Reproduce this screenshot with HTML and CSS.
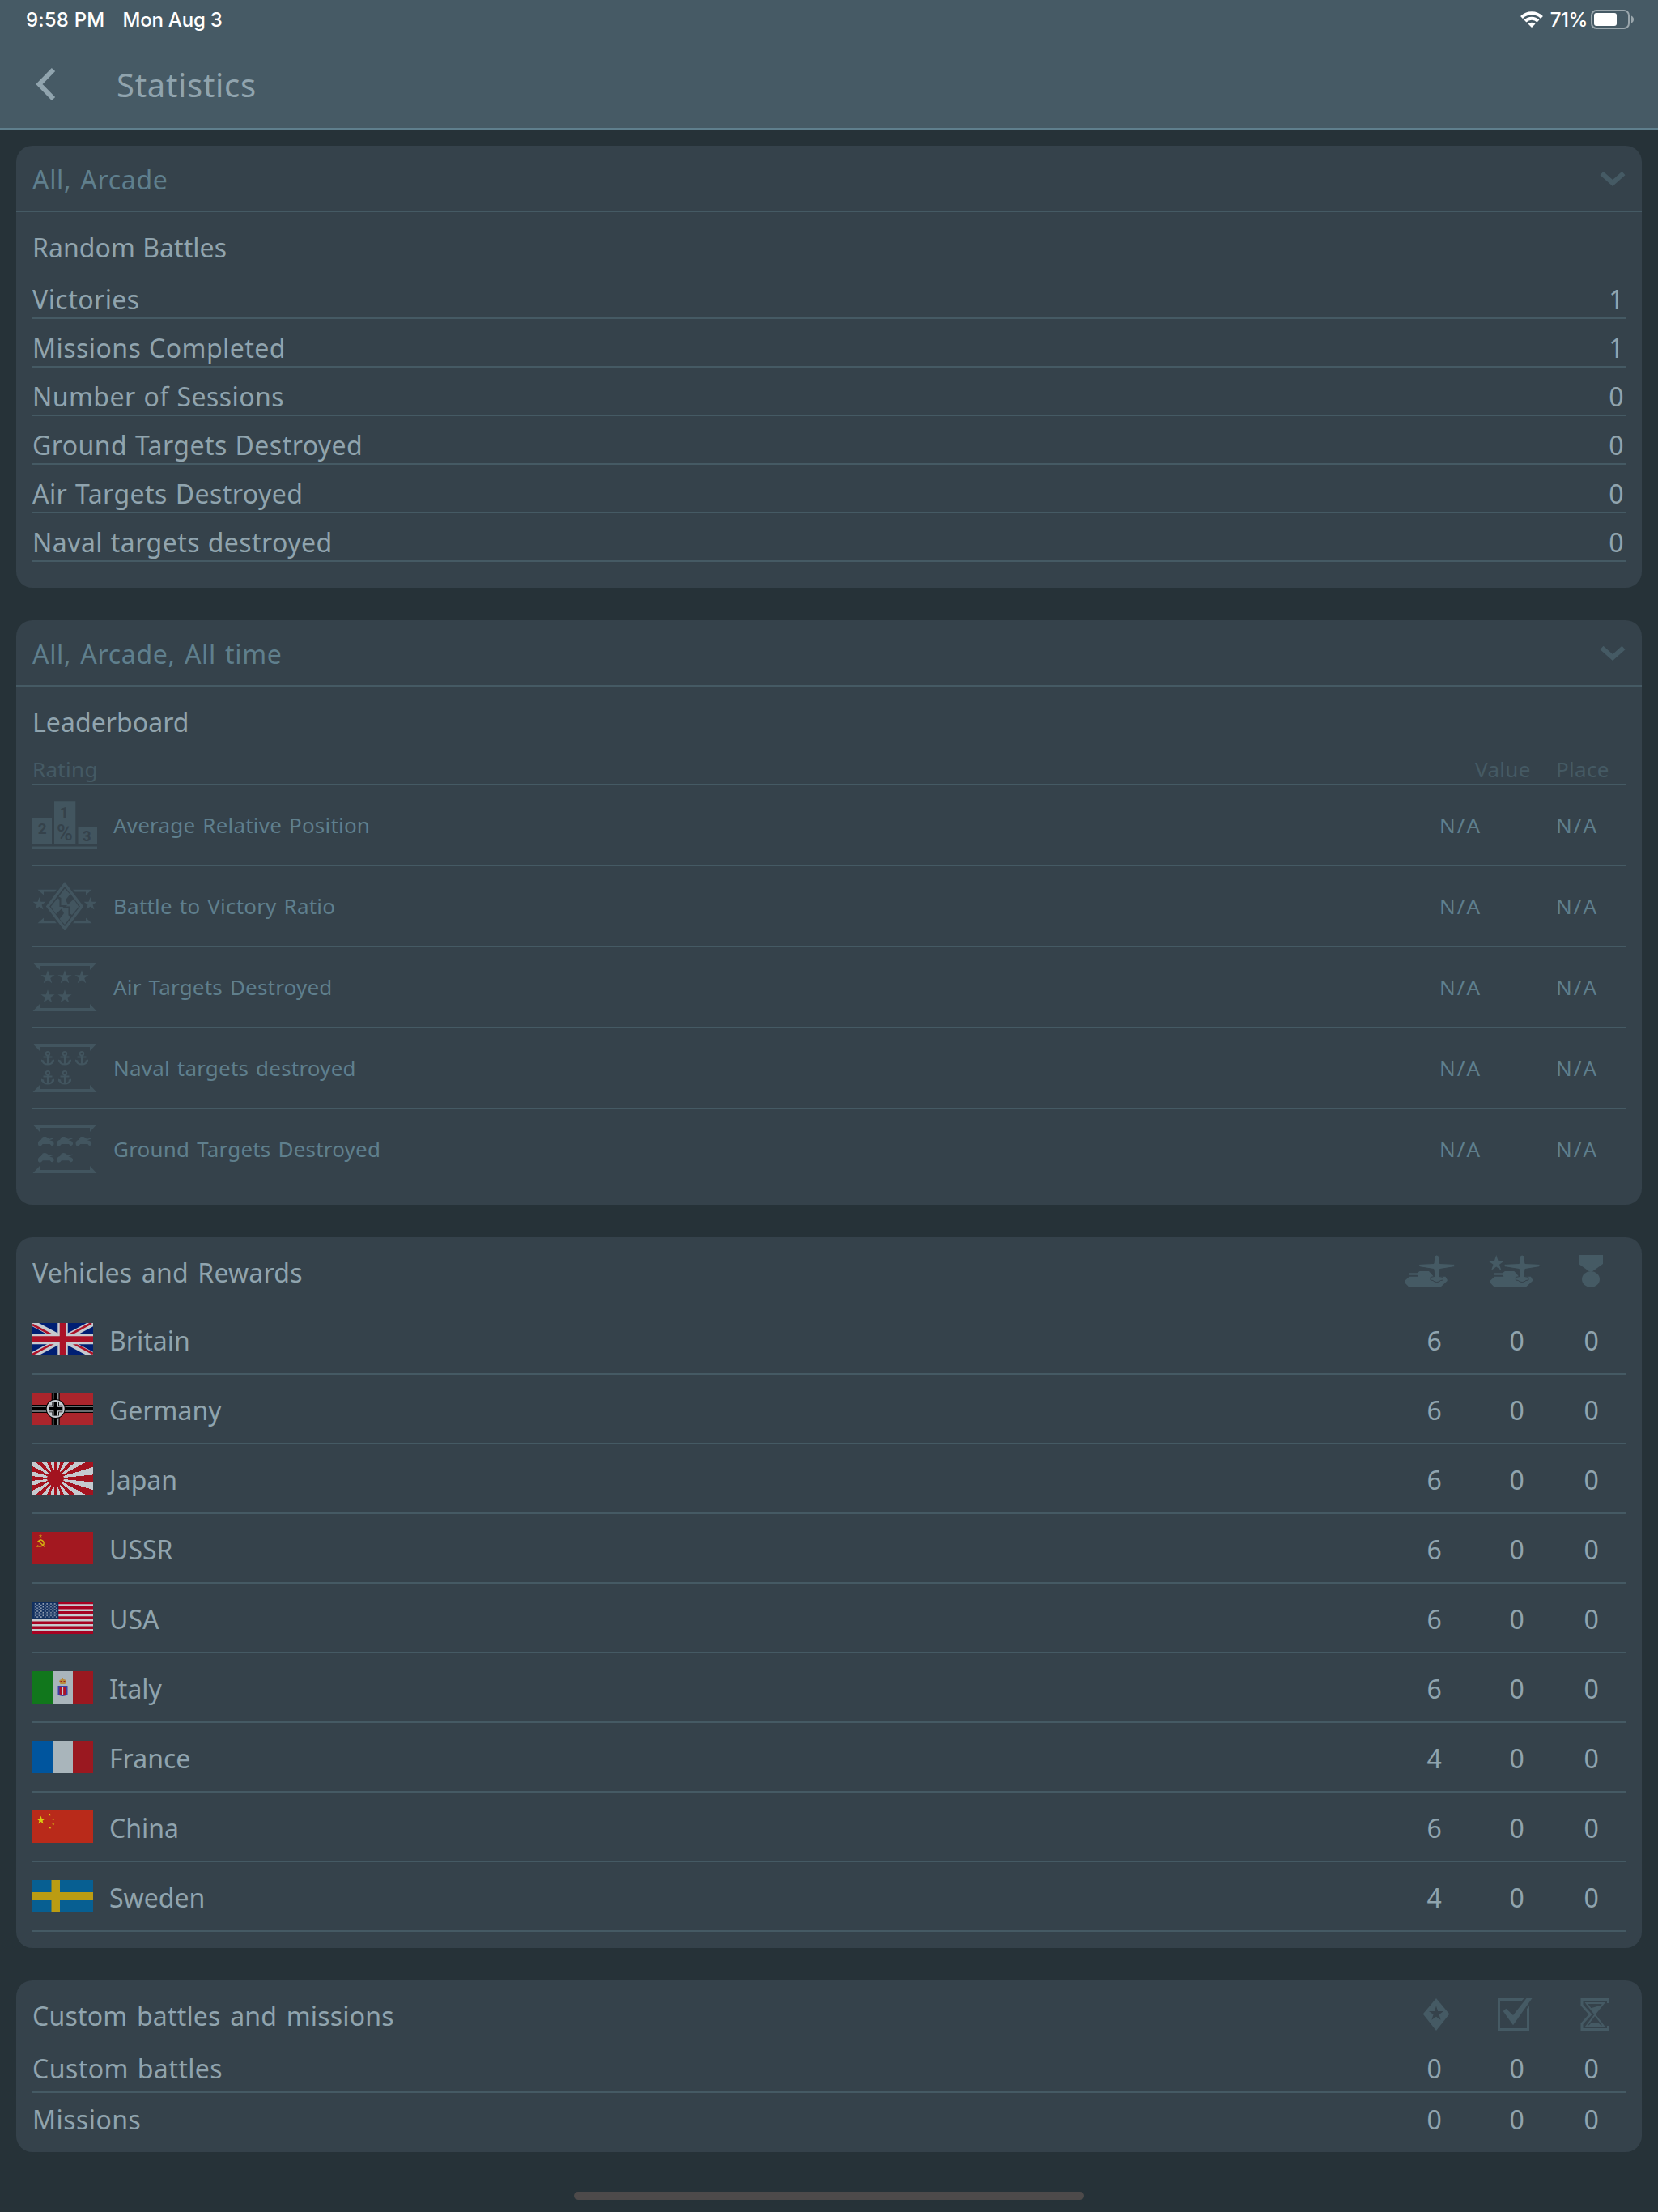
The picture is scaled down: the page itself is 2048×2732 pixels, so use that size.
FILE: index.html
```
<!DOCTYPE html>
<html lang="en">
<head>
<meta charset="UTF-8">
<meta name="viewport" content="width=device-width, initial-scale=1.0">
<title>Statistics</title>
<link rel="stylesheet" href="styles.css">
</head>
<body>

<svg class="defs" width="0" height="0">
    <symbol id="star" viewBox="-10 -10 20 20">
        <polygon points="0,-10 2.25,-3.09 9.51,-3.09 3.63,1.18 5.88,8.09 0,3.82 -5.88,8.09 -3.63,1.18 -9.51,-3.09 -2.25,-3.09"/>
    </symbol>
    <symbol id="frame" viewBox="0 0 80 60">
        <path d="M.5 0H79.5L71 9V4H9V9zM.5 60H79.5L71 51V56H9V51z"/>
    </symbol>
    <symbol id="anchor" viewBox="0 0 16 18">
        <path d="M8 6V16M2.5 7.5H13.5M1.5 12Q2.5 16.5 8 16.5T14.5 12" fill="none" stroke="currentColor" stroke-width="2.2"/>
        <circle cx="8" cy="3.2" r="2.3" fill="none" stroke="currentColor" stroke-width="1.8"/>
        <path d="M0 14V10.5L4 12zM16 14V10.5L12 12z"/>
    </symbol>
    <symbol id="tank" viewBox="0 0 20 12">
        <path d="M0 8Q1 4.500 4 4L6 .5Q9-.5 11.500 1L14 3L19.500 1.500V2.800L14.500 4.500L18 5.500Q20.500 7 20 9.500Q19 12 16.500 11L15 9.200H6L4.500 11Q1.500 12.500.5 10.500z"/>
    </symbol>
    <symbol id="vehicles" viewBox="0 0 80 40">
        <path d="M8 22.300H18.500L21.500 20H33L39 26.700H53.500L55.700 30.500V32L47 40H8.700L3 34V32L8.700 26.700H20L18.500 24.700H8z"/>
        <path class="cut" d="M39.700 3Q40 0 42.700 0T45.700 3L46.500 10.500L63.500 11.300Q65 12 65 13.200T63.500 14.800L46.500 17.500L45.700 26.500L50.500 27.500V31Q47 31 45.500 33Q42.700 34 40 33Q38.500 31 35 31V27.500L39.800 26.500L39 17.500L22 14.800Q20.300 14.500 20.300 13.200T22 11.300L39 10.500z"/>
    </symbol>
</svg>

<header class="topbar">
    <div class="status">
        <span class="time">9:58 PM</span>
        <span class="date">Mon Aug 3</span>
        <svg class="wifi" width="28" height="20" viewBox="0 0 28 20">
            <path d="M1.500 7.500A17.500 17.500 0 0 1 26.500 7.500M6 12A11.300 11.300 0 0 1 22 12" fill="none" stroke="#fff" stroke-width="4"/>
            <path d="M9.500 15.500A6.500 6.500 0 0 1 18.500 15.500L14 20z" fill="#fff"/>
        </svg>
        <span class="percent">71%</span>
        <svg class="battery" width="54" height="24" viewBox="0 0 54 24">
            <rect x="1" y="1" width="46" height="22" rx="6" fill="none" stroke="#9aa6ac" stroke-width="2"/>
            <rect x="4" y="4" width="28" height="16" rx="3" fill="#fff"/>
            <path d="M50 7.500Q53 9 53 12T50 16.500z" fill="#9aa6ac"/>
        </svg>
    </div>
    <div class="nav">
        <svg class="back" width="30" height="44" viewBox="0 0 30 44">
            <path d="M24 4L6.500 22L24 40" fill="none" stroke="currentColor" stroke-width="6"/>
        </svg>
        <h1>Statistics</h1>
    </div>
</header>

<main>
    <section class="card battles">
        <div class="filter">
            <span>All, Arcade</span>
            <svg width="32" height="20" viewBox="0 0 32 20"><path d="M2.500 3L16 15L29.500 3" fill="none" stroke="currentColor" stroke-width="6"/></svg>
        </div>
        <h2>Random Battles</h2>
        <div class="stat"><span>Victories</span><span>1</span></div>
        <div class="stat"><span>Missions Completed</span><span>1</span></div>
        <div class="stat"><span>Number of Sessions</span><span>0</span></div>
        <div class="stat"><span>Ground Targets Destroyed</span><span>0</span></div>
        <div class="stat"><span>Air Targets Destroyed</span><span>0</span></div>
        <div class="stat"><span>Naval targets destroyed</span><span>0</span></div>
    </section>

    <section class="card leaderboard">
        <div class="filter">
            <span>All, Arcade, All time</span>
            <svg width="32" height="20" viewBox="0 0 32 20"><path d="M2.500 3L16 15L29.500 3" fill="none" stroke="currentColor" stroke-width="6"/></svg>
        </div>
        <h2>Leaderboard</h2>
        <div class="columns"><span>Rating</span><span>Value</span><span>Place</span></div>
        <div class="rating">
            <svg width="80" height="60" viewBox="0 0 80 60">
                <path d="M0 21H24V53.300H0zM27 .3H53.300V53.300H27zM56.500 32.300H80V53.300H56.500zM0 56.500H80V59.300H0z"/>
                <g class="digits">
                    <text x="12.300" y="41">2</text>
                    <text x="39.300" y="21">1</text>
                    <text x="67.300" y="50">3</text>
                    <text class="pct" x="40" y="48.500">%</text>
                </g>
            </svg>
            <span>Average Relative Position</span><span>N/A</span><span>N/A</span>
        </div>
        <div class="rating">
            <svg width="80" height="60" viewBox="0 0 80 60">
                <path d="M6.500 9.700H30L27.500 12.500H14V16.500zM73.500 9.700H50L52.500 12.500H66V16.500zM6.500 51.300H30L27.500 48.500H14V44.500zM73.500 51.300H50L52.500 48.500H66V44.500z"/>
                <use href="#star" x="0" y="19" width="17" height="17"/>
                <use href="#star" x="63" y="19" width="17" height="17"/>
                <path d="M40 3L61 30.500L40 58L19 30.500z" fill="none" stroke="currentColor" stroke-width="3.500"/>
                <path id="half" d="M40 8.500L46.500 15.500L41 22.500L44.500 29H35.500V20L32.500 18.500zM31 20.500L33.500 22V31H38.500L29 40L22.800 30.700z"/>
                <use href="#half" transform="rotate(180 40 30.700)"/>
            </svg>
            <span>Battle to Victory Ratio</span><span>N/A</span><span>N/A</span>
        </div>
        <div class="rating">
            <svg width="80" height="60" viewBox="0 0 80 60">
                <use href="#frame"/>
                <use href="#star" x="10" y="9" width="18" height="18"/>
                <use href="#star" x="31" y="9" width="18" height="18"/>
                <use href="#star" x="52" y="9" width="18" height="18"/>
                <use href="#star" x="10" y="33" width="18" height="18"/>
                <use href="#star" x="31" y="33" width="18" height="18"/>
            </svg>
            <span>Air Targets Destroyed</span><span>N/A</span><span>N/A</span>
        </div>
        <div class="rating">
            <svg width="80" height="60" viewBox="0 0 80 60">
                <use href="#frame"/>
                <use href="#anchor" x="11" y="9" width="16" height="18"/>
                <use href="#anchor" x="32" y="9" width="16" height="18"/>
                <use href="#anchor" x="53" y="9" width="16" height="18"/>
                <use href="#anchor" x="11" y="33" width="16" height="18"/>
                <use href="#anchor" x="32" y="33" width="16" height="18"/>
            </svg>
            <span>Naval targets destroyed</span><span>N/A</span><span>N/A</span>
        </div>
        <div class="rating">
            <svg width="80" height="60" viewBox="0 0 80 60">
                <use href="#frame"/>
                <use href="#tank" x="6.700" y="14.700" width="20" height="12"/>
                <use href="#tank" x="30" y="14.700" width="20" height="12"/>
                <use href="#tank" x="53.300" y="14.700" width="20" height="12"/>
                <use href="#tank" x="6.700" y="35" width="20" height="12"/>
                <use href="#tank" x="30" y="35" width="20" height="12"/>
            </svg>
            <span>Ground Targets Destroyed</span><span>N/A</span><span>N/A</span>
        </div>
    </section>

    <section class="card vehicles">
        <div class="heading">
            <h2>Vehicles and Rewards</h2>
            <svg width="80" height="40" viewBox="0 0 80 40"><use href="#vehicles"/></svg>
            <svg width="80" height="40" viewBox="0 0 80 40">
                <use href="#vehicles" x="3.400" width="80" height="40"/>
                <use href="#star" x="2.500" y="0" width="23.500" height="21"/>
            </svg>
            <svg width="80" height="40" viewBox="0 0 80 40">
                <path d="M24 0H54V11L41 20.300H37L24 11z"/>
                <ellipse cx="39" cy="30" rx="11" ry="10"/>
            </svg>
        </div>
        <div class="country">
            <svg width="75" height="40" viewBox="0 0 75 40">
                <path fill="#001f73" d="M0 0H75V40H0z"/>
                <path stroke="#c5cacf" stroke-width="7.500" d="M0 0L75 40M75 0L0 40"/>
                <path stroke="#ab1228" stroke-width="2.600" d="M0 2L37 21.700M75 38L38 18.300M73 0L38 19M0 39L36 19.700"/>
                <path stroke="#c5cacf" stroke-width="12.500" d="M37.500 0V40M0 20H75"/>
                <path stroke="#ab1228" stroke-width="7.500" d="M37.500 0V40M0 20H75"/>
            </svg>
            <span>Britain</span><span>6</span><span>0</span><span>0</span>
        </div>
        <div class="country">
            <svg width="75" height="40" viewBox="0 0 75 40">
                <path fill="#ab252c" d="M0 0H75V40H0z"/>
                <path stroke="#000" stroke-width="10" d="M28.700 0V40M0 20H75"/>
                <path stroke="#8d9397" stroke-width="7.500" d="M28.700 0V40M0 20H75"/>
                <path stroke="#000" stroke-width="4.600" d="M28.700 0V40M0 20H75"/>
                <circle cx="28.700" cy="20" r="12" fill="#000"/>
                <circle cx="28.700" cy="20" r="11" fill="#c5cacf"/>
                <path stroke="#000" stroke-width="8.500" d="M28.700 11.500V28.500M20.200 20H37.200"/>
                <path stroke="#c5cacf" stroke-width="6.800" d="M28.700 11.500V28.500M20.200 20H37.200"/>
                <path stroke="#000" stroke-width="4.600" d="M28.700 11.500V28.500M20.200 20H37.200"/>
            </svg>
            <span>Germany</span><span>6</span><span>0</span><span>0</span>
        </div>
        <div class="country">
            <div class="rising-sun"></div>
            <span>Japan</span><span>6</span><span>0</span><span>0</span>
        </div>
        <div class="country">
            <svg width="75" height="40" viewBox="0 0 75 40">
                <path fill="#a31820" d="M0 0H75V40H0z"/>
                <use href="#star" x="7.500" y="2.500" width="5" height="5" fill="#c48a14"/>
                <path fill="none" stroke="#d6b40f" stroke-width="1.400" d="M10 9.800Q15 11 14 15.500Q11 19.500 6 17M5.500 18.500L7 17M6.500 12L9.500 10L8 12L15 18.300"/>
            </svg>
            <span>USSR</span><span>6</span><span>0</span><span>0</span>
        </div>
        <div class="country">
            <svg width="75" height="40" viewBox="0 0 75 40">
                <defs>
                    <pattern id="canton" x="2.500" y="2" width="4.800" height="3.600" patternUnits="userSpaceOnUse">
                        <circle cx="1.200" cy="1" r=".9" fill="#a9b4c2"/>
                        <circle cx="3.600" cy="2.800" r=".9" fill="#a9b4c2"/>
                    </pattern>
                </defs>
                <path fill="#a60222" d="M0 0H75V40H0z"/>
                <path stroke="#c5cacf" stroke-width="2.600" d="M0 4.600H75M0 10.800H75M0 16.900H75M0 23.100H75M0 29.200H75M0 35.400H75"/>
                <path fill="#12305f" d="M0 0H32.300V22H0z"/>
                <path fill="url(#canton)" d="M2.500 2H30.500V20H2.500z"/>
            </svg>
            <span>USA</span><span>6</span><span>0</span><span>0</span>
        </div>
        <div class="country">
            <svg width="75" height="40" viewBox="0 0 75 40">
                <path fill="#11771c" d="M0 0H25V40H0z"/>
                <path fill="#a9b5bb" d="M25 0H50V40H25z"/>
                <path fill="#9a1820" d="M50 0H75V40H50z"/>
                <path fill="#3a3fa8" d="M31.500 18H43.500V29Q42 30.500 37.500 31Q33 30.500 31.500 29z"/>
                <path fill="#ab1228" d="M33.500 20H42V28.500L37.500 29.500L33.500 28.500z"/>
                <path stroke="#c5cacf" stroke-width="1.200" d="M37.500 20V29.500M33.500 24.500H42"/>
                <path fill="#b98a3a" d="M33 12.500Q33.500 9.500 37 10V8H38V10Q41.500 9.500 42 12.500L40.500 16H34.500z"/>
                <path fill="#9a1820" d="M34.500 12H36.500V14H34.500zM38.500 12H40.500V14H38.500z"/>
            </svg>
            <span>Italy</span><span>6</span><span>0</span><span>0</span>
        </div>
        <div class="country">
            <svg width="75" height="40" viewBox="0 0 75 40">
                <path fill="#00559e" d="M0 0H25V40H0z"/>
                <path fill="#a9b5bb" d="M25 0H50V40H25z"/>
                <path fill="#9a1820" d="M50 0H75V40H50z"/>
            </svg>
            <span>France</span><span>4</span><span>0</span><span>0</span>
        </div>
        <div class="country">
            <svg width="75" height="40" viewBox="0 0 75 40">
                <path fill="#b92a1a" d="M0 0H75V40H0z"/>
                <g fill="#d9cb10">
                    <use href="#star" x="5" y="6.500" width="11" height="11"/>
                    <use href="#star" x="19.500" y="3.500" width="3.500" height="3.500"/>
                    <use href="#star" x="24" y="8.800" width="3.500" height="3.500"/>
                    <use href="#star" x="24" y="15.200" width="3.500" height="3.500"/>
                    <use href="#star" x="20" y="19.700" width="3.500" height="3.500"/>
                </g>
            </svg>
            <span>China</span><span>6</span><span>0</span><span>0</span>
        </div>
        <div class="country">
            <svg width="75" height="40" viewBox="0 0 75 40">
                <path fill="#075f92" d="M0 0H75V40H0z"/>
                <path fill="#bb9c12" d="M0 15H23.500V0H34V15H75V25H34V40H23.500V25H0z"/>
            </svg>
            <span>Sweden</span><span>4</span><span>0</span><span>0</span>
        </div>
    </section>

    <section class="card custom">
        <div class="heading">
            <h2>Custom battles and missions</h2>
            <svg width="80" height="40" viewBox="0 0 80 40">
                <path d="M42 0L58.300 19.500L42 40L25.700 19.500z"/>
                <use class="hole" href="#star" x="32.500" y="9.500" width="19" height="19"/>
            </svg>
            <svg width="80" height="40" viewBox="0 0 80 40">
                <path d="M16 0H48.500L46 3H19V37H52V13L55 9.500V40H16z"/>
                <path d="M22.700 16L26.300 12.700L35 21L51.500 0H58.500L35 33.300z"/>
            </svg>
            <svg width="80" height="40" viewBox="0 0 80 40">
                <path d="M60.500 6V1.500H28V8.500L38.500 20L28 31.500V38.500H60.500V34" fill="none" stroke="currentColor" stroke-width="3"/>
                <path d="M33.500 6H55L44 19.500zM44 20.500L33.500 34.500H55z" fill="none" stroke="currentColor" stroke-width="2"/>
                <path d="M38 12.500L54 8L44 20zM36 34L40 30H48L52 34z"/>
            </svg>
        </div>
        <div class="total"><span>Custom battles</span><span>0</span><span>0</span><span>0</span></div>
        <div class="total"><span>Missions</span><span>0</span><span>0</span><span>0</span></div>
    </section>
</main>

<div class="home-indicator"></div>

</body>
</html>
```
FILE: styles.css
```
* {
    box-sizing: border-box;
}
body {
    margin: 0;
    height: 2732px;
    background-color: #263238;
    color: #90a4ae;
    font-family: "Noto Sans", sans-serif;
    font-size: 32px;
    letter-spacing: 0.45px;
    display: flex;
    flex-direction: column;
    overflow: hidden;
}
svg {
    display: block;
    flex: none;
    fill: currentColor;
}
.defs {
    position: absolute;
}
h1, h2 {
    margin: 0;
    font-weight: normal;
}

/* top bar */
.topbar {
    height: 160px;
    background-color: #465a65;
    border-bottom: 2px solid #5f7f8d;
}
.status {
    height: 48px;
    padding: 0 29px 0 32px;
    display: flex;
    align-items: center;
    color: #fff;
    font-family: Inter, sans-serif;
    font-size: 24px;
    font-weight: 500;
    letter-spacing: 0.2px;
}
.date {
    margin-left: 22px;
    letter-spacing: -0.2px;
}
.wifi {
    margin-left: auto;
}
.percent {
    margin: 0 4px 0 9px;
    letter-spacing: -0.4px;
}
.nav {
    height: 112px;
    padding: 0 0 0 42px;
    display: flex;
    align-items: center;
}
h1 {
    margin-left: 72px;
    padding-top: 1px;
    font-size: 40px;
    letter-spacing: 0.7px;
}

/* cards */
main {
    padding: 20px;
    display: flex;
    flex-direction: column;
    gap: 40px;
}
.card {
    padding: 0 20px;
    background-color: #35424b;
    border-radius: 20px;
}
.filter {
    height: 82px;
    margin: 0 -20px;
    padding: 2px 20px 0 20px;
    display: flex;
    align-items: center;
    justify-content: space-between;
    letter-spacing: 0.7px;
    word-spacing: 2px;
    border-bottom: 2px solid #455a64;
    color: #5f7f8d;
}
.filter svg {
    color: #455a64;
}
h2 {
    font-size: 32px;
    line-height: 58px;
    letter-spacing: 0.2px;
    word-spacing: 3px;
}
.filter + h2 {
    height: 72px;
    padding-top: 15px;
    letter-spacing: 0.05px;
    word-spacing: 1px;
}

/* random battles */
.battles {
    padding-bottom: 32px;
}
.stat {
    height: 60px;
    padding: 13px 2px 0 0;
    display: flex;
    justify-content: space-between;
    line-height: 46px;
    word-spacing: 1px;
    border-bottom: 2px solid #455a64;
}

/* leaderboard */
.leaderboard {
    padding-bottom: 18px;
}
.columns {
    height: 50px;
    padding-top: 12px;
    display: grid;
    grid-template-columns: 1fr 100px 86px;
    line-height: 36px;
    font-size: 26px;
    letter-spacing: 0.3px;
    color: #455a64;
    border-bottom: 2px solid #455a64;
}
.rating {
    height: 100px;
    display: grid;
    grid-template-columns: 100px 1fr 144px 86px;
    align-items: center;
    font-size: 26px;
    color: #5f7f8d;
    border-bottom: 2px solid #455a64;
}
.rating:last-child {
    border-bottom-color: transparent;
}
.rating span {
    letter-spacing: 0.2px;
    word-spacing: 2px;
}
.rating span + span {
    letter-spacing: 2px;
}
.rating svg {
    color: #42555f;
}
.digits {
    fill: #35424b;
    font: bold 19px Roboto, sans-serif;
    letter-spacing: 0;
    text-anchor: middle;
}
.digits .pct {
    font-size: 27px;
    font-weight: 500;
}

/* vehicles, custom battles */
.heading, .country, .total {
    display: grid;
    align-items: center;
    justify-items: center;
    padding-right: 1px;
}
.heading {
    height: 84px;
    grid-template-columns: 1fr 102px 102px 82px;
}
.heading h2 {
    padding-top: 3px;
}
.heading h2, .total span:first-child {
    justify-self: start;
}
.heading svg {
    color: #455a64;
}
.cut {
    stroke: #35424b;
    stroke-width: 1;
}
.hole {
    fill: #35424b;
}
.vehicles {
    padding-bottom: 20px;
}
.country {
    height: 86px;
    grid-template-columns: 75px 1fr 102px 102px 82px;
    border-bottom: 2px solid #455a64;
}
.country span {
    padding-top: 3px;
}
.country span:nth-child(2) {
    justify-self: start;
    margin-left: 20px;
    letter-spacing: 0;
}
.rising-sun {
    width: 75px;
    height: 40px;
    background:
        radial-gradient(circle at 28.5px 20px, #a3131f 10px, transparent 10.5px),
        repeating-conic-gradient(from -5.625deg at 28.5px 20px, #a3131f 0 11.25deg, #c5cacf 11.25deg 22.5deg);
}
.custom {
    padding-bottom: 9px;
}
.total {
    height: 64px;
    grid-template-columns: 1fr 102px 102px 82px;
}
.total span {
    word-spacing: 2px;
}
.heading + .total {
    height: 55px;
    padding-bottom: 5px;
    border-bottom: 2px solid #455a64;
}

.home-indicator {
    width: 630px;
    height: 10px;
    margin: 29px auto 0;
    border-radius: 5px;
    background-color: #4d4a4a;
}
```
